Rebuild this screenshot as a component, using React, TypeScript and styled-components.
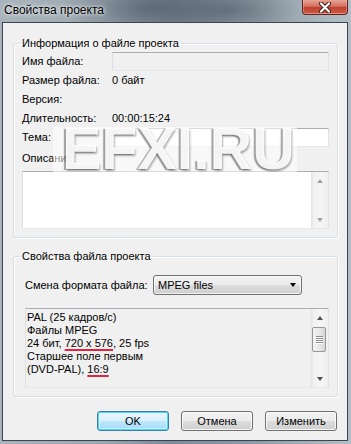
import React from "react";
import styled, { createGlobalStyle } from "styled-components";

const Global = createGlobalStyle`
  html, body { margin: 0; padding: 0; }
  body {
    width: 351px;
    height: 444px;
    overflow: hidden;
    font-family: "Liberation Sans", Arial, sans-serif;
    font-size: 11px;
    color: #000;
  }
`;

const Window = styled.div`
  position: relative;
  width: 351px;
  height: 444px;
  box-sizing: border-box;
  display: flex;
  flex-direction: column;
  padding: 0 3px 3px 2px;
  background:
    radial-gradient(ellipse 90px 30px at 150px 8px, rgba(60, 72, 84, 0.55), rgba(60, 72, 84, 0) 100%),
    radial-gradient(ellipse 70px 24px at 230px 10px, rgba(40, 50, 60, 0.35), rgba(40, 50, 60, 0) 100%),
    linear-gradient(90deg, #a9b3bc 0%, #9aa6b0 30%, #7e8c98 48%, #8c99a4 70%, #b4bec6 100%);
`;

const TitleBar = styled.div`
  height: 22px;
  flex: none;
  display: flex;
  align-items: flex-start;
  justify-content: space-between;
`;

const Title = styled.span`
  font-family: "Liberation Sans", Arial, sans-serif;
  font-size: 12px;
  line-height: 20px;
  padding-left: 2px;
  color: #000;
  text-shadow: 0 0 6px rgba(255, 255, 255, 0.9), 0 0 3px rgba(255, 255, 255, 0.9);
`;

const CloseButton = styled.div`
  width: 46px;
  height: 15px;
  box-sizing: border-box;
  border: 1px solid #5e251c;
  border-top: none;
  border-radius: 0 0 4px 4px;
  display: flex;
  align-items: center;
  justify-content: center;
  background: linear-gradient(#e7a395 0%, #d56e5e 45%, #c0402f 52%, #cc5a44 100%);
  box-shadow: inset 0 -1px 0 rgba(255, 200, 190, 0.5), inset 1px 0 0 rgba(255, 200, 190, 0.35), inset -1px 0 0 rgba(255, 200, 190, 0.35);
`;

const Client = styled.div`
  flex: 1;
  box-sizing: border-box;
  border: 1px solid #3a4550;
  background: #f0f0f0;
  display: flex;
  flex-direction: column;
  padding: 0 9px 0 10px;
`;

const Group = styled.fieldset<{ $mt: number }>`
  margin: ${(p) => p.$mt}px 0 0 0;
  padding: 0 8px;
  border: 1px solid #d5dfe5;
  border-radius: 3px;
  box-shadow: inset 1px 1px 0 #ffffff, 1px 1px 0 #ffffff;
  min-width: 0;
`;

const Legend = styled.legend`
  padding: 0 2px;
  margin-left: -2px;
  line-height: 14px;
  font-size: 11px;
`;

const InfoGrid = styled.div`
  display: grid;
  grid-template-columns: 90px 1fr;
  grid-auto-rows: 19px;
  align-items: center;
  padding-top: 2px;
`;

const Label = styled.span`
  line-height: 13px;
  white-space: nowrap;
`;

const Value = styled.span`
  line-height: 13px;
  white-space: nowrap;
`;

const TextBox = styled.div<{ $readOnly?: boolean }>`
  height: 19px;
  box-sizing: border-box;
  border: 1px solid;
  border-color: #abadb3 #e2e3ea #e3e9ef #dbdfe6;
  background: ${(p) => (p.$readOnly ? "#f0f0f0" : "#ffffff")};
`;

const DescLabel = styled.div`
  line-height: 13px;
  margin-top: 5px;
`;

const MultiBox = styled.div<{ $height: number; $bg: string; $mt: number }>`
  height: ${(p) => p.$height}px;
  margin-top: ${(p) => p.$mt}px;
  box-sizing: border-box;
  border: 1px solid;
  border-color: #abadb3 #e2e3ea #e3e9ef #dbdfe6;
  background: ${(p) => p.$bg};
  display: flex;
`;

const MultiText = styled.div`
  flex: 1;
  padding: 2px 0 0 1px;
  line-height: 13px;
  white-space: nowrap;
  overflow: hidden;
`;

const ScrollBar = styled.div`
  width: 16px;
  flex: none;
  display: flex;
  flex-direction: column;
  border-left: 1px solid #e6e6e6;
  background: linear-gradient(90deg, #e9e9e9 0px, #f2f2f2 2px, #f5f5f5 60%, #efefef 100%);
`;

const ArrowButton = styled.div`
  height: 17px;
  flex: none;
  display: flex;
  align-items: center;
  justify-content: center;
`;

const Triangle = styled.div<{ $dir: "up" | "down"; $color: string }>`
  width: 0;
  height: 0;
  border-left: 3.5px solid transparent;
  border-right: 3.5px solid transparent;
  ${(p) =>
    p.$dir === "up"
      ? `border-bottom: 4px solid ${p.$color};`
      : `border-top: 4px solid ${p.$color};`}
`;

const Track = styled.div`
  flex: 1;
  display: flex;
  flex-direction: column;
  padding-top: 1px;
`;

const Thumb = styled.div`
  height: 25px;
  width: 14px;
  box-sizing: border-box;
  border: 1px solid #979797;
  border-radius: 2px;
  background: linear-gradient(90deg, #f4f4f4 0%, #e8e8e8 50%, #d8d8d8 100%);
  display: flex;
  flex-direction: column;
  align-items: center;
  justify-content: center;
  gap: 1px;
`;

const Grip = styled.div`
  width: 7px;
  height: 1px;
  background: #8a8a8a;
  box-shadow: 0 1px 0 #ffffff;
`;

const FormatRow = styled.div`
  display: flex;
  align-items: center;
  padding: 12px 0 0 3px;
`;

const FormatLabel = styled.span`
  width: 128px;
  line-height: 13px;
  white-space: nowrap;
`;

const Select = styled.div`
  width: 149px;
  height: 20px;
  box-sizing: border-box;
  border: 1px solid #707070;
  border-radius: 3px;
  background: linear-gradient(#f2f2f2 0%, #ebebeb 50%, #dddddd 51%, #cfcfcf 100%);
  box-shadow: inset 0 0 0 1px rgba(255, 255, 255, 0.7);
  display: flex;
  align-items: center;
  justify-content: space-between;
  padding: 0 5px 0 4px;
`;

const SelectText = styled.span`
  line-height: 13px;
`;

const ListWrap = styled.div`
  padding: 0 0 8px 3px;
`;

const Marked = styled.span`
  text-decoration: underline;
  text-decoration-color: #e3223f;
  text-decoration-thickness: 2px;
  text-underline-offset: 2px;
`;

const ButtonRow = styled.div`
  display: flex;
  justify-content: flex-end;
  gap: 12px;
  margin-top: 14px;
  padding-right: 1px;
`;

const Button = styled.div<{ $default?: boolean }>`
  width: 72px;
  height: 20px;
  box-sizing: border-box;
  border-radius: 3px;
  display: flex;
  align-items: center;
  justify-content: center;
  line-height: 13px;
  border: 1px solid ${(p) => (p.$default ? "#3c7fb1" : "#707070")};
  background: ${(p) =>
    p.$default
      ? "linear-gradient(#eaf6fd 0%, #d9f0fc 50%, #bee6fd 51%, #a7d9f5 100%)"
      : "linear-gradient(#f2f2f2 0%, #ebebeb 50%, #dddddd 51%, #cfcfcf 100%)"};
  box-shadow: ${(p) =>
    p.$default
      ? "inset 0 0 0 1px #48d8fb, inset 0 0 0 2px rgba(255,255,255,0.4)"
      : "inset 0 0 0 1px rgba(255,255,255,0.8)"};
`;

const Watermark = styled.div`
  position: absolute;
  left: 53px;
  top: 127px;
  width: 244px;
  height: 45px;
  box-sizing: border-box;
  padding-left: 9px;
  background: rgba(255, 255, 255, 0.55);
  font-family: "Liberation Sans", Arial, sans-serif;
  font-weight: bold;
  font-size: 59px;
  line-height: 45px;
  color: rgba(255, 255, 255, 0.92);
  white-space: nowrap;
  overflow: hidden;
  text-shadow: -2px 1px 1px rgba(70, 70, 70, 0.5), 1px 2px 2px rgba(0, 0, 0, 0.3);
`;

function VScroll({ thumb, arrow }: { thumb?: boolean; arrow: string }) {
  return (
    <ScrollBar>
      <ArrowButton>
        <Triangle $dir="up" $color={arrow} />
      </ArrowButton>
      <Track>{thumb && <Thumb><Grip /><Grip /><Grip /><Grip /></Thumb>}</Track>
      <ArrowButton>
        <Triangle $dir="down" $color={arrow} />
      </ArrowButton>
    </ScrollBar>
  );
}

export default function App() {
  return (
    <>
      <Global />
      <Window>
        <TitleBar>
          <Title>Свойства проекта</Title>
          <CloseButton>
            <svg width="14" height="11" viewBox="0 0 14 11">
              <path d="M3 1.5 L11 9.5 M11 1.5 L3 9.5" stroke="#3b1d18" strokeWidth="4" strokeLinecap="round" />
              <path d="M3 1.5 L11 9.5 M11 1.5 L3 9.5" stroke="#ffffff" strokeWidth="2.2" strokeLinecap="round" />
            </svg>
          </CloseButton>
        </TitleBar>
        <Client>
          <Group $mt={13}>
            <Legend>Информация о файле проекта</Legend>
            <InfoGrid>
              <Label>Имя файла:</Label>
              <TextBox $readOnly />
              <Label>Размер файла:</Label>
              <Value>0 байт</Value>
              <Label>Версия:</Label>
              <Value />
              <Label>Длительность:</Label>
              <Value>00:00:15:24</Value>
              <Label>Тема:</Label>
              <TextBox />
            </InfoGrid>
            <DescLabel>Описание:</DescLabel>
            <MultiBox $height={58} $bg="#ffffff" $mt={6}>
              <MultiText />
              <VScroll arrow="#a3a3a3" />
            </MultiBox>
            <div style={{ height: 8 }} />
          </Group>
          <Group $mt={11}>
            <Legend>Свойства файла проекта</Legend>
            <FormatRow>
              <FormatLabel>Смена формата файла:</FormatLabel>
              <Select>
                <SelectText>MPEG files</SelectText>
                <Triangle $dir="down" $color="#000" />
              </Select>
            </FormatRow>
            <ListWrap>
              <MultiBox $height={80} $bg="#f0f0f0" $mt={13}>
                <MultiText>
                  PAL (25 кадров/с)
                  <br />
                  Файлы MPEG
                  <br />
                  24 бит, <Marked>720 x 576</Marked>, 25 fps
                  <br />
                  Старшее поле первым
                  <br />
                  (DVD-PAL), <Marked>16:9</Marked>
                </MultiText>
                <VScroll thumb arrow="#4f4f4f" />
              </MultiBox>
            </ListWrap>
          </Group>
          <ButtonRow>
            <Button $default>OK</Button>
            <Button>Отмена</Button>
            <Button>Изменить</Button>
          </ButtonRow>
        </Client>
        <Watermark>EFXI.RU</Watermark>
      </Window>
    </>
  );
}
